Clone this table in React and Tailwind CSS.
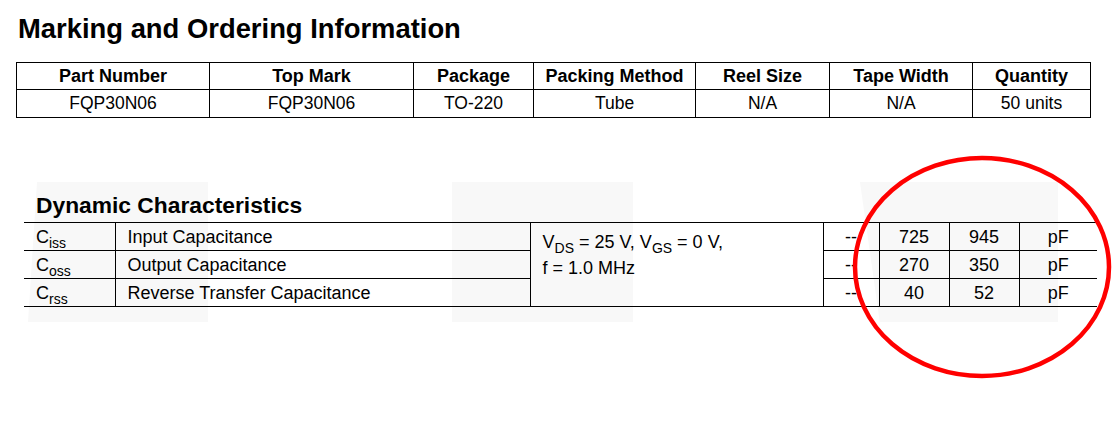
const ordering = {
  head: ["Part Number", "Top Mark", "Package", "Packing Method", "Reel Size", "Tape Width", "Quantity"],
  widths: [193, 204, 120, 162, 134, 143, 118],
  row: ["FQP30N06", "FQP30N06", "TO-220", "Tube", "N/A", "N/A", "50 units"],
};

const dynamicRows = [
  { sym: "C", sub: "iss", name: "Input Capacitance", min: "--", typ: "725", max: "945", unit: "pF" },
  { sym: "C", sub: "oss", name: "Output Capacitance", min: "--", typ: "270", max: "350", unit: "pF" },
  { sym: "C", sub: "rss", name: "Reverse Transfer Capacitance", min: "--", typ: "40", max: "52", unit: "pF" },
];

const dynWidths = [91, 415, 293, 56, 70, 70, 78];

// subscript used for C_iss, V_DS etc.
const Sub = ({ children }) => (
  <sub className="text-[14px] -bottom-[5px]">{children}</sub>
);

const App = () => {
  return (
    <div className="relative w-[1118px] h-[439px] overflow-hidden bg-white text-black font-['Liberation_Sans',Arial,sans-serif]">
      {/* faint scan watermark patches */}
      <div className="absolute left-[28px] top-[182px] w-[180px] h-[140px] bg-[#f8f8f8] [clip-path:polygon(5%_0,100%_0,100%_100%,0_100%)]" />
      <div className="absolute left-[452px] top-[182px] w-[181px] h-[140px] bg-[#f8f8f8]" />
      <div className="absolute left-[860px] top-[182px] w-[198px] h-[140px] bg-[#f8f8f8] [clip-path:polygon(0_0,100%_0,100%_100%,10%_100%)]" />

      <div className="relative">
        <h1 className="ml-[18px] mt-[15px] text-[27.4px] leading-[27px] font-bold">
          Marking and Ordering Information
        </h1>

        {/* ordering table */}
        <table className="ml-[16px] mt-[20px] w-[1075px] table-fixed border-collapse">
          <colgroup>
            {ordering.widths.map((w, i) => (
              <col key={i} style={{ width: w }} />
            ))}
          </colgroup>
          <thead>
            <tr>
              {ordering.head.map((h) => (
                <th key={h} className="h-[27px] p-0 border border-black text-center text-[18px] leading-none font-bold">
                  {h}
                </th>
              ))}
            </tr>
          </thead>
          <tbody>
            <tr>
              {ordering.row.map((c, i) => (
                <td key={i} className="h-[28px] p-0 border border-black text-center text-[17.5px] leading-none">
                  {c}
                </td>
              ))}
            </tr>
          </tbody>
        </table>

        <h2 className="ml-[36px] mt-[76px] text-[22.8px] leading-[23px] font-bold">Dynamic Characteristics</h2>

        {/* dynamic characteristics table */}
        <table className="ml-[24px] mt-[5px] w-[1073px] table-fixed border-collapse text-[18px]">
          <colgroup>
            {dynWidths.map((w, i) => (
              <col key={i} style={{ width: w }} />
            ))}
          </colgroup>
          <tbody>
            {dynamicRows.map((r, i) => (
              <tr key={r.sub}>
                <td className={`h-[28px] p-0 pl-[12px] border-b border-black leading-none ${i === 0 ? "border-t" : ""}`}>
                  {r.sym}
                  <Sub>{r.sub}</Sub>
                </td>
                <td className={`p-0 pl-[12px] border-b border-l border-black leading-none ${i === 0 ? "border-t" : ""}`}>
                  {r.name}
                </td>
                {i === 0 && (
                  <td rowSpan={3} className="p-0 pl-[12px] pt-[6px] align-top border-t border-b border-l border-black leading-[26px]">
                    <div>
                      V<Sub>DS</Sub> = 25 V, V<Sub>GS</Sub> = 0 V,
                    </div>
                    <div>f = 1.0 MHz</div>
                  </td>
                )}
                {[r.min, r.typ, r.max, r.unit].map((v, j) => (
                  <td
                    key={j}
                    className={`p-0 text-center border-b border-l border-black leading-none ${i === 0 ? "border-t" : ""}`}
                  >
                    {v}
                  </td>
                ))}
              </tr>
            ))}
          </tbody>
        </table>
      </div>

      {/* red hand-drawn circle */}
      <svg className="absolute left-0 top-0 pointer-events-none" width="1118" height="439">
        <ellipse cx="982" cy="267" rx="127" ry="109" fill="none" stroke="#ff0000" strokeWidth="4.5" />
      </svg>
    </div>
  );
};

export default App;
